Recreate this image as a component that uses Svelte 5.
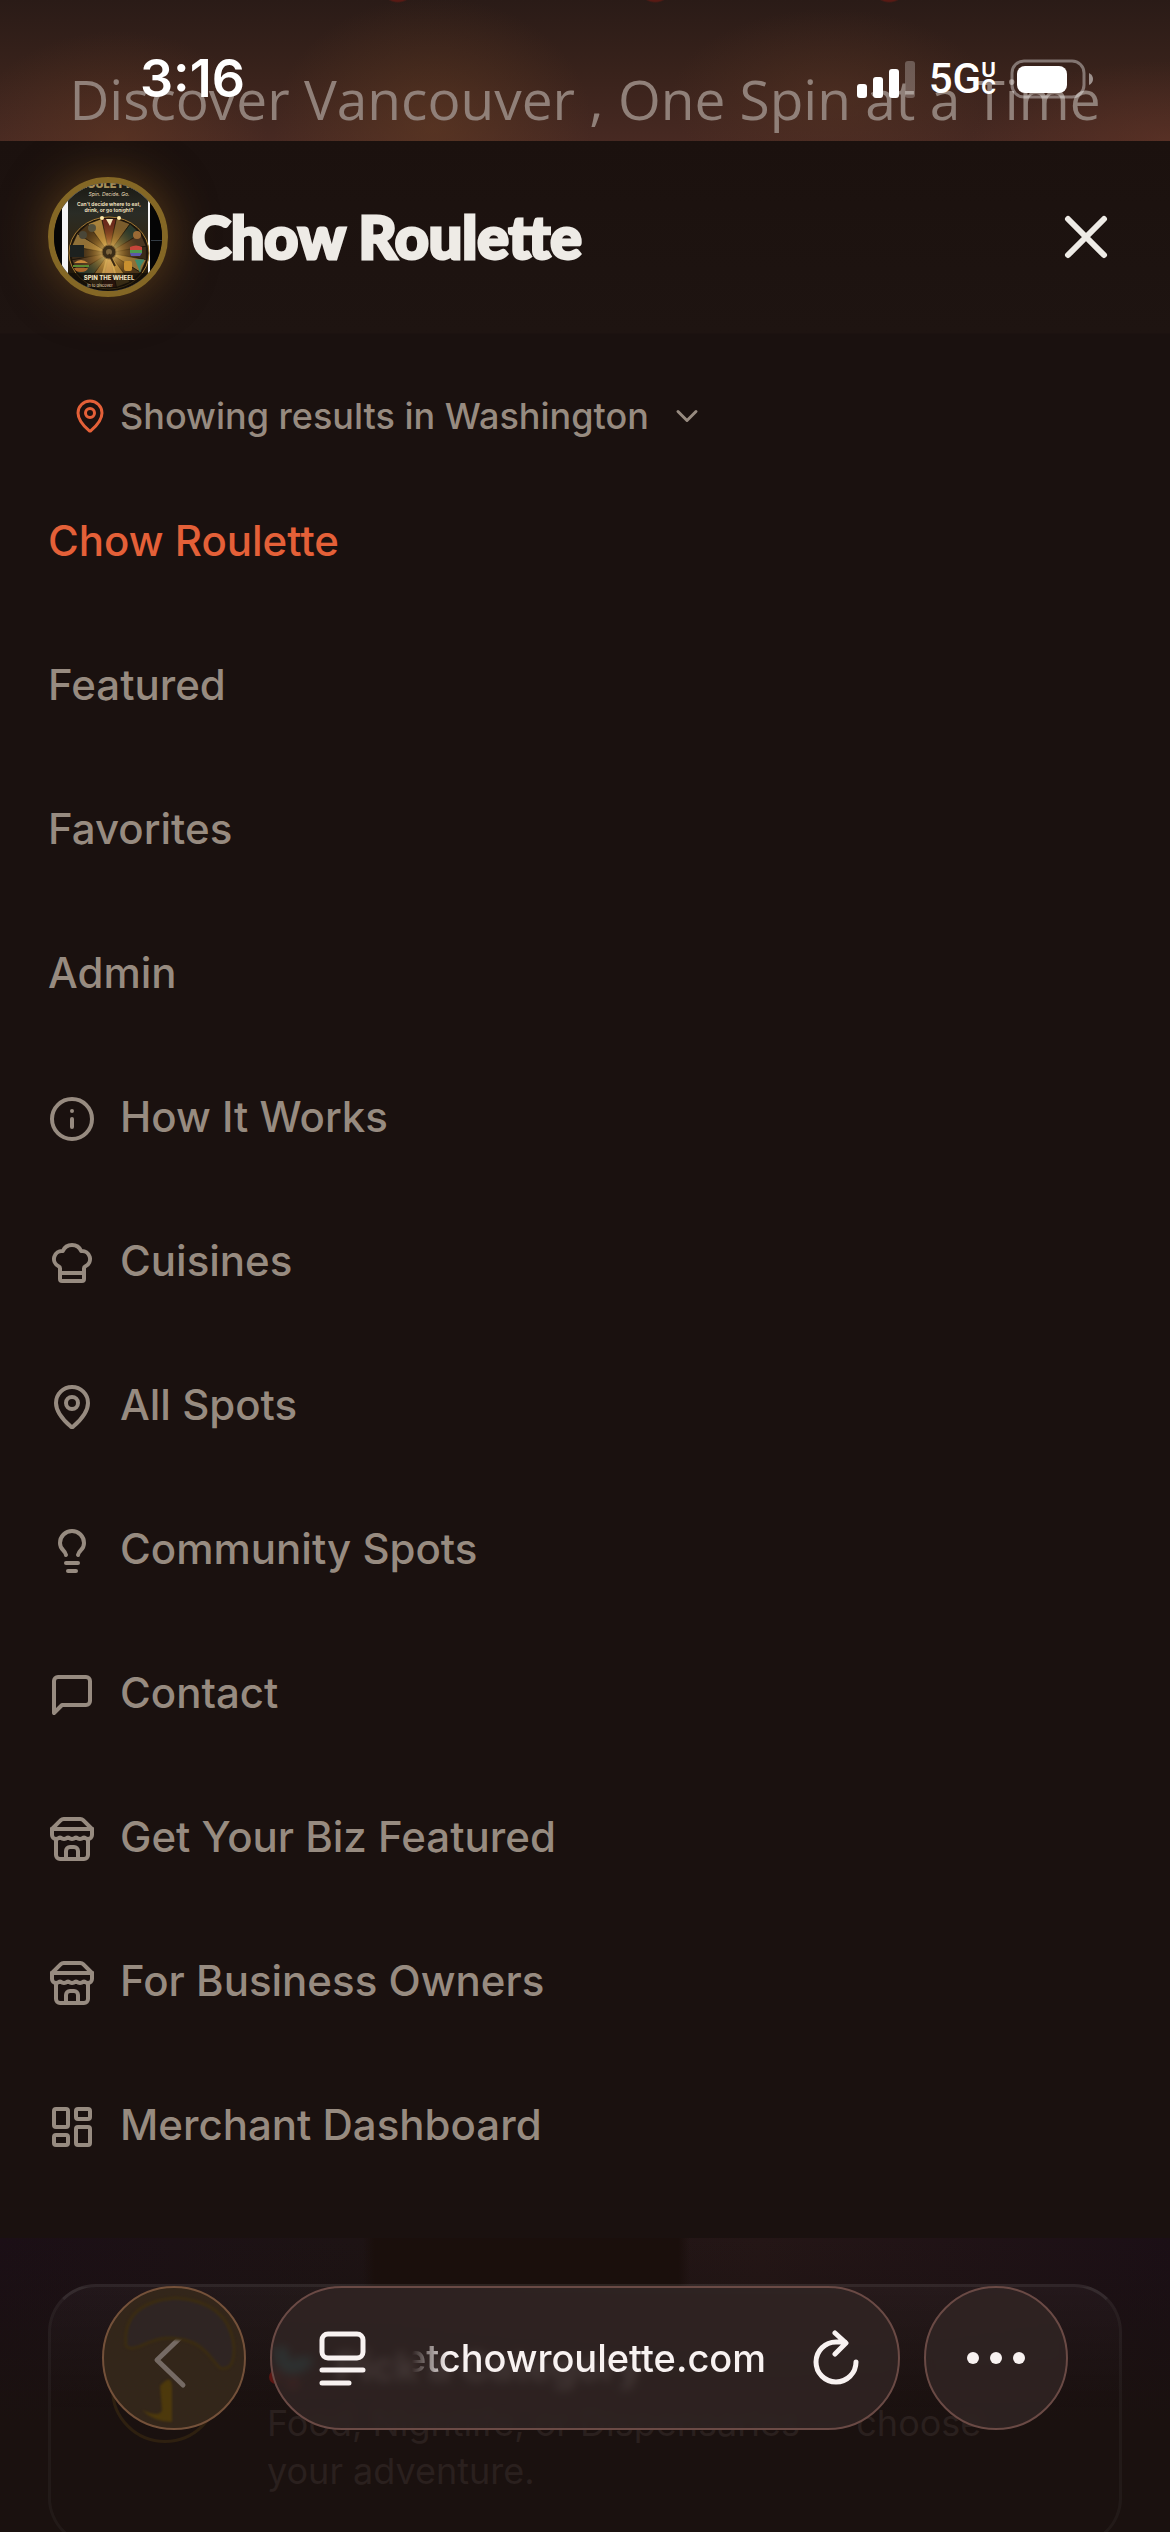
<script lang="ts">
  type MenuItem = { label: string; icon?: string; active?: boolean };

  const items: MenuItem[] = [
    { label: "Chow Roulette", active: true },
    { label: "Featured" },
    { label: "Favorites" },
    { label: "Admin" },
    { label: "How It Works", icon: "info" },
    { label: "Cuisines", icon: "chef" },
    { label: "All Spots", icon: "pin" },
    { label: "Community Spots", icon: "bulb" },
    { label: "Contact", icon: "message" },
    { label: "Get Your Biz Featured", icon: "store" },
    { label: "For Business Owners", icon: "store" },
    { label: "Merchant Dashboard", icon: "dashboard" },
  ];

  const icons: Record<string, string[]> = {
    info: ["M12 2a10 10 0 1 0 0 20 10 10 0 0 0 0-20z", "M12 16v-4", "M12 8h.01"],
    chef: [
      "M17 21a1 1 0 0 0 1-1v-5.35c0-.457.316-.844.727-1.041a4 4 0 0 0-2.134-7.589 5 5 0 0 0-9.186 0 4 4 0 0 0-2.134 7.588c.411.198.727.585.727 1.041V20a1 1 0 0 0 1 1Z",
      "M6 17h12",
    ],
    pin: [
      "M20 10c0 4.993-5.539 10.193-7.399 11.799a1 1 0 0 1-1.202 0C9.539 20.193 4 14.993 4 10a8 8 0 0 1 16 0",
      "M12 7a3 3 0 1 0 0 6 3 3 0 0 0 0-6z",
    ],
    bulb: [
      "M15 14c.2-1 .7-1.7 1.5-2.5 1-.9 1.5-2.2 1.5-3.5A6 6 0 0 0 6 8c0 1 .2 2.2 1.5 3.5.7.7 1.3 1.5 1.5 2.5",
      "M9 18h6",
      "M10 22h4",
    ],
    message: ["M21 15a2 2 0 0 1-2 2H7l-4 4V5a2 2 0 0 1 2-2h14a2 2 0 0 1 2 2z"],
    store: [
      "m2 7 4.41-4.41A2 2 0 0 1 7.83 2h8.34a2 2 0 0 1 1.42.59L22 7",
      "M4 12v8a2 2 0 0 0 2 2h12a2 2 0 0 0 2-2v-8",
      "M15 22v-4a2 2 0 0 0-2-2h-2a2 2 0 0 0-2 2v4",
      "M2 7h20",
      "M22 7v3a2 2 0 0 1-2 2a2.7 2.7 0 0 1-1.59-.63.7.7 0 0 0-.82 0A2.7 2.7 0 0 1 16 12a2.7 2.7 0 0 1-1.59-.63.7.7 0 0 0-.82 0A2.7 2.7 0 0 1 12 12a2.7 2.7 0 0 1-1.59-.63.7.7 0 0 0-.82 0A2.7 2.7 0 0 1 8 12a2.7 2.7 0 0 1-1.59-.63.7.7 0 0 0-.82 0A2.7 2.7 0 0 1 4 12a2 2 0 0 1-2-2V7",
    ],
    dashboard: [
      "M4 3h5a1 1 0 0 1 1 1v7a1 1 0 0 1-1 1H4a1 1 0 0 1-1-1V4a1 1 0 0 1 1-1z",
      "M15 3h5a1 1 0 0 1 1 1v3a1 1 0 0 1-1 1h-5a1 1 0 0 1-1-1V4a1 1 0 0 1 1-1z",
      "M15 12h5a1 1 0 0 1 1 1v7a1 1 0 0 1-1 1h-5a1 1 0 0 1-1-1v-7a1 1 0 0 1 1-1z",
      "M4 16h5a1 1 0 0 1 1 1v3a1 1 0 0 1-1 1H4a1 1 0 0 1-1-1v-3a1 1 0 0 1 1-1z",
    ],
  };

  // wheel slices for the logo
  const sliceColors = ["#6b2a1c", "#7a5c2c", "#2c3a2c", "#4b3520", "#3a2a18", "#8f7038", "#4a3418", "#a8823c"];
  const slices = Array.from({ length: 16 }, (_, i) => {
    const a = ((i - 0.5) / 16) * Math.PI * 2 - Math.PI / 2;
    const b = ((i + 0.5) / 16) * Math.PI * 2 - Math.PI / 2;
    const p = (t: number) => `${(61 + Math.cos(t) * 38).toFixed(1)} ${(76 + Math.sin(t) * 35).toFixed(1)}`;
    return { d: `M61 76L${p(a)}L${p(b)}Z`, fill: sliceColors[i % sliceColors.length] };
  });

  let open = $state(true);
</script>

<div class="page">
  <section class="hero">
    <p class="tagline">Discover Vancouver , One Spin at a Time</p>
    <div class="status">
      <span class="time">3:16</span>
      <div class="status-right">
        <svg class="signal" viewBox="0 0 58 38" aria-hidden="true">
          <rect x="0" y="24" width="10" height="14" rx="3" />
          <rect x="16" y="17" width="10" height="21" rx="3" />
          <rect x="32" y="9" width="10" height="29" rx="3" />
          <rect x="48" y="1" width="10" height="37" rx="3" opacity="0.25" />
        </svg>
        <span class="network">5G</span>
        <span class="band"><span>U</span><span>C</span></span>
        <svg class="battery" viewBox="0 0 84 40" aria-hidden="true">
          <rect x="2" y="2" width="72" height="36" rx="12" fill="none" stroke="#fff" stroke-width="3" opacity="0.38" />
          <rect x="7" y="7" width="50" height="27" rx="8" />
          <path d="M79 14q4 2 4 6t-4 6z" opacity="0.5" />
        </svg>
      </div>
    </div>
  </section>

  <header class="header">
    <a class="brand" href="#home">
      <span class="logo">
        <svg viewBox="0 0 120 120" aria-hidden="true">
          <defs>
            <linearGradient id="sky" x1="0" y1="0" x2="0" y2="1">
              <stop offset="0" stop-color="#17160f" />
              <stop offset="0.3" stop-color="#2a2c26" />
              <stop offset="0.6" stop-color="#33250f" />
              <stop offset="1" stop-color="#120d07" />
            </linearGradient>
            <radialGradient id="glow">
              <stop offset="0" stop-color="#ffdf8a" stop-opacity="0.9" />
              <stop offset="0.5" stop-color="#d29a3a" stop-opacity="0.45" />
              <stop offset="1" stop-color="#8a5a18" stop-opacity="0" />
            </radialGradient>
          </defs>
          <rect width="120" height="120" fill="#050505" />
          <rect x="14" width="88" height="120" fill="#f4f4f4" />
          <rect x="20" width="80" height="120" fill="url(#sky)" />
          <rect x="103" y="63" width="17" height="1" fill="#333c44" />
          <text x="61" y="11" class="logo-title">ROULETTE</text>
          <text x="61" y="19" class="logo-sub">Spin. Decide. Go.</text>
          <text x="61" y="29" class="logo-line">Can't decide where to eat,</text>
          <text x="61" y="35" class="logo-line">drink, or go tonight?</text>
          <ellipse cx="61" cy="76" rx="40" ry="36" fill="#1c140b" stroke="#a57b35" />
          {#each slices as s}
            <path d={s.d} fill={s.fill} stroke="#171008" stroke-width="0.6" />
          {/each}
          <circle cx="35" cy="58" r="4" fill="#494638" />
          <circle cx="44" cy="51" r="4" fill="#54503c" />
          <circle cx="89" cy="58" r="4" fill="#9a6a35" />
          <circle cx="61" cy="76" r="30" fill="url(#glow)" />
          <path d="M58 82h6l5 18H53z" fill="#e0b45c" opacity="0.7" />
          <circle cx="61" cy="75" r="7" fill="#3b2d18" stroke="#8c6c37" />
          <circle cx="61" cy="75" r="3" fill="#7c643c" />
          <path d="M61 77l6 12" stroke="#3b2812" stroke-width="2" />
          <circle cx="54" cy="41" r="2" fill="#ffe9a8" />
          <circle cx="71" cy="41" r="2" fill="#ffe9a8" />
          <path d="M58 42h7l-3 7z" fill="#f2e4b8" />
          <rect x="22" y="68" width="14" height="12" fill="#1d211f" />
          <path d="M26 86q7-6 14 0z" fill="#c9893a" />
          <path d="M25 88h16v2H25z" fill="#5d8a32" />
          <path d="M26 91h14q-1 4-7 4t-7-4z" fill="#a8662a" />
          <rect x="76" y="84" width="8" height="10" rx="2" fill="#c9902f" />
          <path d="M82 70q6-3 12 0v3H82z" fill="#c8453a" />
          <path d="M82 73h12v3H82z" fill="#4e9a4e" />
          <path d="M82 76h12l-2 3h-9z" fill="#5b58a8" />
          <path d="M87 83h9l-4 6v6" fill="#3f8a6d" stroke="#3f8a6d" />
          <rect x="20" y="96" width="80" height="24" fill="#120d07" opacity="0.75" />
          <text x="61" y="103" class="logo-cta">SPIN THE WHEEL</text>
          <text x="52" y="110" class="logo-foot">in to discover</text>
        </svg>
      </span>
      <span class="brand-name">Chow Roulette</span>
    </a>
    <button class="close" aria-label="Close menu" onclick={() => (open = !open)}>
      <svg viewBox="0 0 24 24" aria-hidden="true"><path d="M18 6 6 18M6 6l12 12" /></svg>
    </button>
  </header>

  {#if open}
    <nav class="menu">
      <button class="location">
        <svg class="location-pin" viewBox="0 0 24 24" aria-hidden="true">
          {#each icons.pin as d}<path {d} />{/each}
        </svg>
        <span>Showing results in Washington</span>
        <svg class="chevron" viewBox="0 0 24 24" aria-hidden="true"><path d="m6 9 6 6 6-6" /></svg>
      </button>
      <ul>
        {#each items as item}
          <li>
            <a class="item" class:active={item.active} href="#menu">
              {#if item.icon}
                <svg class="item-icon" viewBox="0 0 24 24" aria-hidden="true">
                  {#each icons[item.icon] as d}<path {d} />{/each}
                </svg>
              {/if}
              <span>{item.label}</span>
            </a>
          </li>
        {/each}
      </ul>
    </nav>
  {/if}

  <main class="behind">
    <article class="card">
      <span class="step"></span>
      <div class="card-text">
        <h2>
          <svg viewBox="0 0 48 48" aria-hidden="true">
            <path d="M14 4q0 22 12 20t14-10" fill="none" stroke="#1f7a7e" stroke-width="14" />
            <circle cx="9" cy="34" r="7" fill="#5b1512" />
            <circle cx="26" cy="40" r="6" fill="#7a1e1a" />
          </svg>
          Pick a Category
        </h2>
        <p>Food, Nightlife, or Dispensaries — choose your adventure.</p>
      </div>
    </article>
  </main>

  <div class="toolbar">
    <button class="glass round back" aria-label="Back">
      <svg class="back-glow" viewBox="0 0 144 144" aria-hidden="true">
        <path d="M22 58Q18 14 72 10Q126 14 130 60Q130 84 116 80C104 68 98 50 64 50C44 50 30 66 22 58Z" fill="#2f2523" stroke="#3b2c12" stroke-width="3" />
        <path d="M56 98q12-14 12 2v34q-18 0-30-12q18 8 20 0z" fill="#4d390c" />
      </svg>
      <svg class="back-icon" viewBox="0 0 48 60" aria-hidden="true"><path d="M31 5 5 30l26 25" /></svg>
    </button>
    <div class="glass address">
      <button class="tool" aria-label="Page menu">
        <svg viewBox="0 0 48 56" aria-hidden="true">
          <rect x="4" y="4" width="41" height="24" rx="6" />
          <path d="M4 40h41M4 53h27" />
        </svg>
      </button>
      <span class="url">etchowroulette.com</span>
      <button class="tool" aria-label="Reload">
        <svg viewBox="0 0 48 56" aria-hidden="true">
          <path d="M24 12a20 20 0 1 0 20 20M24 12h9M23 3l11 10-11 11" />
        </svg>
      </button>
    </div>
    <button class="glass round" aria-label="More">
      <svg class="dots" viewBox="0 0 58 12" aria-hidden="true">
        <circle cx="6" cy="6" r="6" />
        <circle cx="29" cy="6" r="6" />
        <circle cx="52" cy="6" r="6" />
      </svg>
    </button>
  </div>
</div>

<style>
  :global(body) {
    margin: 0;
    background: #1a110f;
  }

  .page {
    --bg: #1a110f;
    --muted: #978b80;
    --accent: #e46038;
    --text: #eeebe6;
    height: 100vh;
    display: flex;
    flex-direction: column;
    overflow: hidden;
    background: var(--bg);
    color: var(--muted);
    font-family: Inter, "Liberation Sans", sans-serif;
  }

  button {
    background: none;
    border: 0;
    padding: 0;
    color: inherit;
    font: inherit;
    cursor: pointer;
  }

  a {
    color: inherit;
    text-decoration: none;
  }

  svg {
    display: block;
    flex: none;
  }

  .hero {
    position: relative;
    height: 141px;
    flex: none;
    display: flex;
    align-items: flex-end;
    justify-content: center;
    background:
      radial-gradient(circle 18px at 34% -15px, #5a1a14 90%, transparent),
      radial-gradient(circle 18px at 56% -15px, #5a1a14 90%, transparent),
      radial-gradient(circle 18px at 76% -15px, #5a1a14 90%, transparent),
      radial-gradient(ellipse 150px 110px at 10% 100%, #6a3c2477, transparent),
      radial-gradient(ellipse 160px 130px at 37% 90%, #6a402477, transparent),
      radial-gradient(ellipse 160px 90px at 71% 70%, #5a362477, transparent),
      radial-gradient(ellipse 200px 80px at 100% 100%, #6a382877, transparent),
      linear-gradient(#2a1b17, #38221b 50%, #472922);
  }

  .tagline {
    margin: 0;
    padding-bottom: 6px;
    font-family: "Open Sans", sans-serif;
    font-size: 55px;
    line-height: 72px;
    white-space: nowrap;
    color: #908079;
  }

  .status {
    position: absolute;
    inset: 0 76px 0 140px;
    display: flex;
    align-items: center;
    justify-content: space-between;
    padding-top: 16px;
    color: #fff;
    fill: #fff;
  }

  .time {
    font-size: 52px;
    font-weight: 600;
  }

  .status-right {
    display: flex;
    align-items: center;
  }

  .signal {
    width: 58px;
    height: 38px;
    margin-right: 14px;
  }

  .network {
    font-family: Roboto, sans-serif;
    font-size: 42px;
    font-weight: 500;
    line-height: 40px;
  }

  .band {
    display: grid;
    margin: 0 14px 0 0;
    font-size: 20px;
    font-weight: 700;
    line-height: 17px;
  }

  .battery {
    width: 84px;
    height: 40px;
  }

  .header {
    flex: none;
    display: flex;
    align-items: center;
    justify-content: space-between;
    padding: 36px 48px;
    border-bottom: 1px solid #1c1210;
    background: linear-gradient(#1b110e, #1e1411);
    color: var(--text);
  }

  .brand {
    display: flex;
    align-items: center;
    gap: 24px;
  }

  .logo {
    box-sizing: border-box;
    width: 120px;
    height: 120px;
    border: 6px solid #846725;
    border-radius: 50%;
    box-shadow: 0 0 48px #84581f99;
    overflow: hidden;
  }

  .logo svg {
    width: 120px;
    height: 120px;
    margin: -6px;
  }

  .logo text {
    text-anchor: middle;
    fill: #e9dfba;
  }

  .logo .logo-title {
    font-size: 11px;
    font-weight: 900;
    fill: #a8905a;
  }

  .logo-sub {
    font-size: 5px;
    font-style: italic;
  }

  .logo-line {
    font-size: 5px;
    font-weight: 700;
  }

  .logo-cta {
    font-size: 6px;
    font-weight: 800;
  }

  .logo-foot {
    font-size: 4px;
  }

  .brand-name {
    font-family: Lato, sans-serif;
    font-size: 59px;
    font-weight: 900;
    line-height: 72px;
    white-space: nowrap;
    -webkit-text-stroke: 3px var(--text);
  }

  .close svg {
    width: 72px;
    height: 72px;
  }

  .close svg,
  .location svg,
  .item-icon {
    fill: none;
    stroke: currentColor;
    stroke-width: 2;
    stroke-linecap: round;
    stroke-linejoin: round;
  }

  .menu {
    flex: none;
    display: flex;
    flex-direction: column;
    gap: 16px;
    padding: 46px 48px 42px;
  }

  .location {
    align-self: flex-start;
    display: flex;
    align-items: center;
    gap: 12px;
    height: 72px;
    padding: 0 24px;
    font-size: 36px;
    font-weight: 500;
    white-space: nowrap;
  }

  .location svg {
    width: 36px;
    height: 36px;
  }

  .location-pin {
    color: var(--accent);
  }

  .location .chevron {
    margin-left: 8px;
  }

  .menu ul {
    list-style: none;
    margin: 0;
    padding: 0;
  }

  .item {
    display: flex;
    align-items: center;
    gap: 24px;
    height: 144px;
    font-size: 42px;
    font-weight: 500;
  }

  .item.active {
    color: var(--accent);
  }

  .item-icon {
    width: 48px;
    height: 48px;
    margin-top: 6px;
  }

  .behind {
    flex: 1;
    padding: 46px 48px 0;
    background:
      linear-gradient(90deg, transparent 31%, #1a0f0c 32%, #1a0f0c 58%, transparent 59%) top / 100% 48px no-repeat,
      linear-gradient(transparent, var(--bg) 60%),
      linear-gradient(90deg, #1b0f16, #1d1314 30%, #241616 65%, #1b0f16);
  }

  .card {
    display: flex;
    gap: 48px;
    padding: 48px 60px;
    border: 3px solid #ffffff0a;
    border-top-color: #ffffff16;
    border-radius: 48px;
    background: linear-gradient(#ffffff08, transparent 50%);
  }

  .step {
    box-sizing: border-box;
    flex: none;
    width: 108px;
    height: 108px;
    border: 3px solid #2e2010;
    border-radius: 50%;
  }

  .card h2 {
    display: flex;
    align-items: center;
    gap: 20px;
    margin: 0;
    color: #aaa09c;
    font-size: 40px;
    line-height: 64px;
  }

  .card h2 svg {
    width: 48px;
    height: 48px;
  }

  .card p {
    margin: 0;
    color: #2a201e;
    font-size: 36px;
    line-height: 48px;
  }

  /* browser chrome floats over the page */
  .toolbar {
    position: fixed;
    inset: auto 0 0;
    display: flex;
    gap: 24px;
    padding: 0 102px 102px;
    color: #f8f2f1;
  }

  .glass {
    box-sizing: border-box;
    height: 144px;
    border: 2px solid #6a4a45;
    border-radius: 72px;
    background: #302423d9;
    backdrop-filter: blur(5px);
  }

  .round {
    flex: none;
    width: 144px;
    display: grid;
    place-items: center;
    overflow: hidden;
  }

  .round > svg {
    grid-area: 1 / 1;
  }

  .back {
    border-color: #74513a;
    background: #33261a;
  }

  .back-glow {
    width: 144px;
    height: 144px;
    filter: blur(1px);
  }

  .back-icon {
    width: 48px;
    height: 60px;
    fill: none;
    stroke: #756a64;
    stroke-width: 5;
    stroke-linecap: round;
    stroke-linejoin: round;
  }

  .address {
    flex: 1;
    display: flex;
    align-items: center;
    justify-content: space-between;
    padding: 0 38px 0 46px;
  }

  .tool svg {
    width: 48px;
    height: 56px;
    fill: none;
    stroke: currentColor;
    stroke-width: 5;
    stroke-linecap: round;
    stroke-linejoin: round;
  }

  .url {
    padding-right: 8px;
    font-size: 38px;
    font-weight: 500;
    white-space: nowrap;
    mask-image: linear-gradient(90deg, transparent 8px, #000 44px);
  }

  .dots {
    width: 58px;
    height: 12px;
    fill: currentColor;
  }
</style>
